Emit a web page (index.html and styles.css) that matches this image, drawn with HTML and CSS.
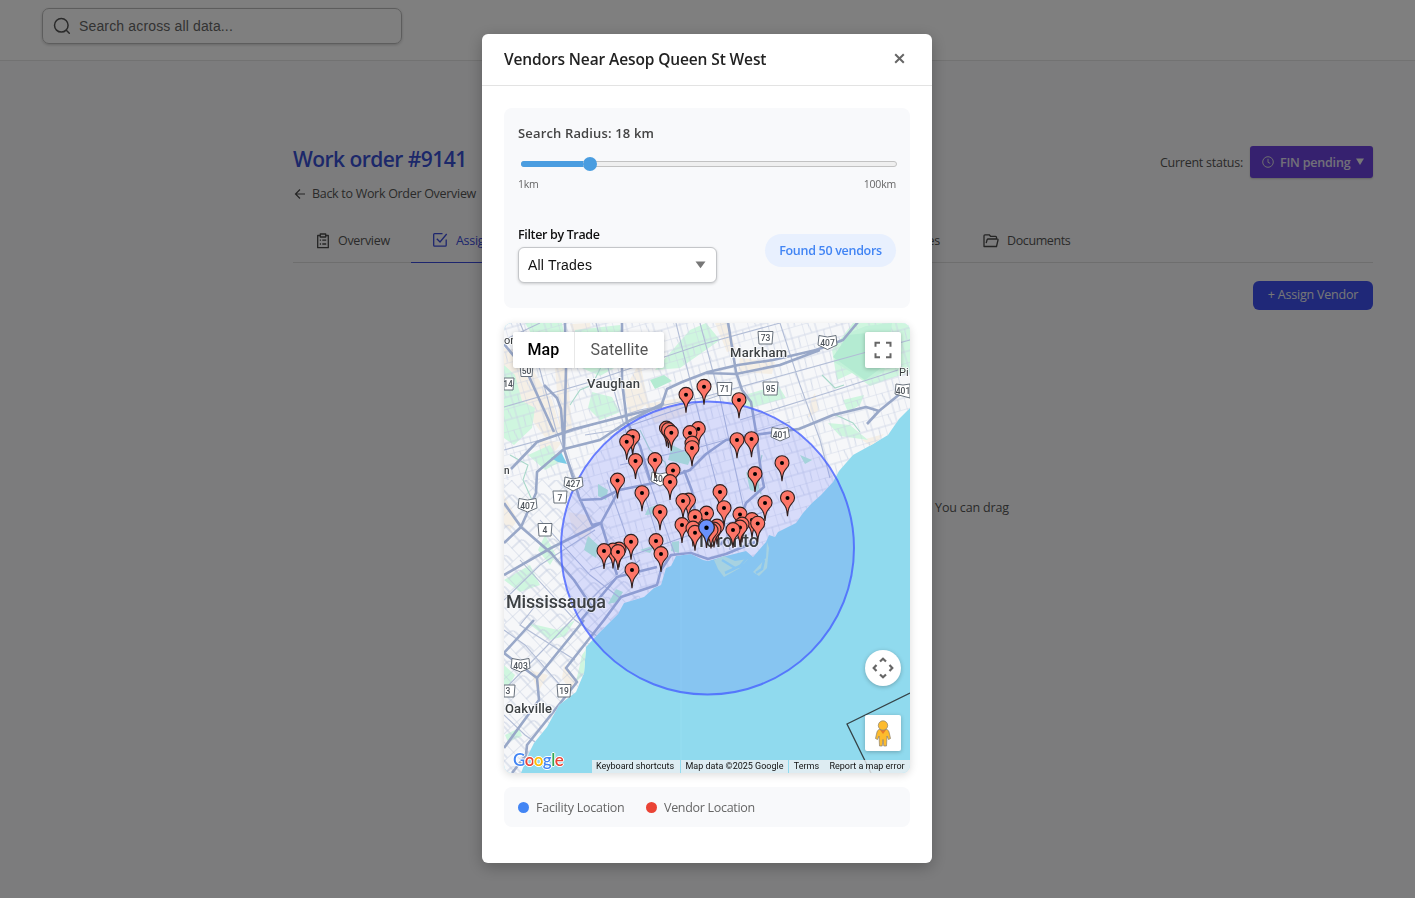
FILE: index.html
```html
<!DOCTYPE html>
<html lang="en">
<head>
<meta charset="utf-8">
<title>Work order #9141</title>
<link rel="stylesheet" href="styles.css">
</head>
<body>
<header class="topbar">
  <div class="search">
    <svg width="18" height="18" viewBox="0 0 18 18" fill="none" stroke="#555" stroke-width="1.5" stroke-linecap="round"><circle cx="8.3" cy="8.3" r="6.8"/><path d="M13.3 13.3 16.3 16.3"/></svg>
    <span class="search-text">Search across all data...</span>
  </div>
</header>
<main class="content">
  <div class="title-row">
    <div>
      <h1 class="title">Work order #9141</h1>
      <a class="back"><svg width="12" height="12" viewBox="0 0 12 12" fill="none" stroke="#4a4a4a" stroke-width="1.2"><path d="M11 6H1.5M6 1.5 1.5 6 6 10.5"/></svg><span class="back-text">Back to Work Order Overview</span></a>
    </div>
    <div class="status">
      <span class="status-label">Current status:</span>
      <span class="status-button">
        <svg width="12" height="12" viewBox="0 0 12 12" fill="none" stroke="#ddd" stroke-width="1"><circle cx="6" cy="6" r="5.3"/><path d="M6 2.8V6.3L8.2 7.4"/></svg>
        <span class="status-text">FIN pending</span>
        <svg width="8" height="8" viewBox="0 0 8 8" fill="#eee"><path d="M0 .5H8L4 7Z"/></svg>
      </span>
    </div>
  </div>
  <nav class="tabs">
    <span class="tab tab-overview"><svg width="14" height="16" viewBox="0 0 14 16" fill="none" stroke="#4a4a4a" stroke-width="1.3"><path d="M4 2.5H1.7V14.7H12.3V2.5H10M4.3 1H9.7V4H4.3Z" stroke-linejoin="round"/><path d="M3.8 7.2H5M6.3 7.2H10.2M3.8 11H5M6.3 11H10.2"/></svg><span class="t-overview">Overview</span></span>
    <span class="tab tab-active"><svg width="16" height="16" viewBox="0 0 16 16" fill="none" stroke="#3b4bdc" stroke-width="1.3"><path d="M10.5 1.7H2.6Q1.7 1.7 1.7 2.6V13.2Q1.7 14.2 2.6 14.2H13.2Q14.2 14.2 14.2 13.2V7.5"/><path d="M4.8 6.8 8 10 14.7 2"/></svg><span>Assignments</span></span>
    <span class="tab tab-invoices"><span>Invoices</span></span>
    <span class="tab tab-docs"><svg width="16" height="16" viewBox="0 0 16 16" fill="none" stroke="#4a4a4a" stroke-width="1.3" stroke-linejoin="round"><path d="M13.5 6V4.3Q13.5 3.3 12.5 3.3H7.5L6.2 1.8H2Q1 1.8 1 2.8V13.5H13.5L15 7Q15.2 6 14 6H5.2Q4.3 6 4 7L3.2 10.2"/></svg><span class="t-docs">Documents</span></span>
  </nav>
  <div class="actions"><span class="assign"><span class="assign-text">+ Assign Vendor</span></span></div>
  <p class="empty">No vendors assigned. You can drag</p>
</main>

<div class="overlay">
  <section class="modal">
    <div class="modal-head">
      <h2 class="modal-title">Vendors Near Aesop Queen St West</h2>
      <svg width="11" height="11" viewBox="0 0 11 11" stroke="#666" stroke-width="2"><path d="M1.2 1.2 9.8 9.8M9.8 1.2 1.2 9.8"/></svg>
    </div>
    <div class="modal-body">
      <div class="panel">
        <div class="radius-label">Search Radius: 18 km</div>
        <div class="slider"><div class="slider-fill"></div><div class="slider-thumb"></div></div>
        <div class="range"><span>1km</span><span class="range-max">100km</span></div>
        <div class="filter-row">
          <div>
            <div class="filter-label">Filter by Trade</div>
            <div class="select"><span>All Trades</span><svg width="11" height="8" viewBox="0 0 11 8" fill="#777"><path d="M.5 .5H10.500L5.5 7.2Z"/></svg></div>
          </div>
          <span class="found"><span class="found-text">Found 50 vendors</span></span>
        </div>
      </div>

      <div class="map">
        <svg class="map-canvas" width="406" height="450" viewBox="504 323 406 450">
          <defs>
            <path id="land" d="M504 323H910V408L899 419 888 435 873 444 853 455 839 471 833 482 821 495 812 503 803 513 796 523 778 532 775 537 769 535 766 542 753 557 746 551 726 556 708 561 703 560 691 554 676 556 671 566 666 568 661 585 654 588 644 597 624 603 618 614 612 620 599 633 586 647 584 673 576 692 559 705 547 727 534 743 529 753 521 773H504Z"/>
            <clipPath id="landclip"><use href="#land"/></clipPath>
            <clipPath id="west"><path d="M504 480 590 480 650 620 560 773H504Z"/></clipPath>
            <clipPath id="east"><path d="M504 323H910V600H645L585 480H504Z"/></clipPath>
            <pattern id="grid-e" width="26" height="22" patternUnits="userSpaceOnUse" patternTransform="translate(6 3) rotate(-16)"><path d="M0 0H26M0 0V22M13 0V22M0 11H26M6 0 8 11M20 11 19 22" fill="none" stroke="#cbd3e4" stroke-width=".8"/></pattern>
            <pattern id="grid-w" width="23" height="20" patternUnits="userSpaceOnUse" patternTransform="rotate(-43)"><path d="M0 0H23M0 0V20M11 0V20M0 10H11Q15 10 15 15V20" fill="none" stroke="#c3ccdf" stroke-width=".9"/></pattern>
            <g id="pin"><path d="M0 18C-.6 10-2 8-4.6 5A7 7 0 1 1 4.6 5C2 8 .6 10 0 18Z" stroke="#30201f" stroke-width="1.1"/><circle r="2" fill="#000"/></g>
          </defs>
          <rect x="504" y="323" width="406" height="450" fill="#90daee"/>
          <use href="#land" fill="#f6f7f9"/>
          <g clip-path="url(#landclip)">
            <g fill="#f5efe6">
              <path d="M504 348 520 350 552 400 561 432 545 437 524 410 512 385 504 380ZM552 330 566 350 572 430 560 432 556 380ZM640 362 648 402 630 420 624 390ZM568 512 592 516 590 540 574 535ZM740 358 775 362 772 374 738 372ZM815 393 819 410 808 418 811 400ZM564 665 578 682 570 690 562 678ZM530 670 548 675 538 692ZM504 495 518 520 510 530 504 525ZM862 440 884 434 872 447Z"/>
              <path d="M570 324 590 323 592 335 575 340ZM715 323 728 323 736 350 727 352ZM645 404 680 398 688 415 655 424ZM540 440 562 442 556 450 540 458Z"/>
            </g>
            <g fill="#cff6df">
              <path d="M504 365 515 375 522 401 535 408 532 428 514 445 504 438ZM525 323 562 323 567 348 538 345ZM575 330 620 325 625 362 600 376 575 365ZM592 392 612 397 620 412 600 420 588 408ZM837 380 832 350 853 323 910 323V372L886 380 870 386 852 373ZM655 370 690 330 706 323 720 340 680 368ZM528 455 550 445 560 462 545 470ZM545 535 556 555 550 565 538 550ZM504 580 530 565 540 585 520 592ZM504 665 515 675 508 688 504 690ZM505 735 519 728 522 736 508 742ZM528 623 558 630 575 620 565 636 550 640ZM582 655 587 648 586 672 576 682ZM828 423 850 425 868 440 840 436ZM735 398 778 385 786 398 750 408ZM843 400 864 395 860 405 848 412Z"/>
            </g>
            <g clip-path="url(#east)"><rect x="504" y="323" width="406" height="280" fill="url(#grid-e)"/></g>
            <g clip-path="url(#west)"><rect x="504" y="470" width="160" height="303" fill="url(#grid-w)"/></g>
            <path d="M834 362 846 334 866 326 892 323 888 350 884 372 866 381Z" fill="#c2f1d9"/>
            <g fill="#b4ebd2"><path d="M848 335 866 333 885 365 865 380 833 357ZM598 484 608 490 606 500 598 496ZM650 380 664 375 672 381 655 389ZM588 536 598 545 596 558 584 550ZM672 445 692 455 688 465 668 460ZM672 542 679 541 679 553 671 551ZM648 508 660 504 656 514 645 515ZM616 589 623 592 617 602 608 604ZM746 472 760 477 758 492 750 490ZM640 550 655 545 650 553ZM800 455 812 460 805 464Z"/></g>
            <path d="M551 458 561 452 567 464 558 462Z" fill="#79cce6"/>
            <g fill="none" stroke="#a9d8ca" stroke-width="1.1"><path d="M595 350 602 365 592 385 580 390 570 405M640 430 650 450 665 462 670 480M762 455 756 480 761 494M836 415 853 423 860 432M822 375 835 388 844 385M510 455 528 465 523 480 532 500"/></g>
            <g fill="none" stroke="#b2bdd6" stroke-width="1.1">
              <path d="M504 407 590 382 700 345 780 323M504 450 570 432 640 410 700 398 820 365 910 340M520 323 540 370 556 430 580 490M596 323 618 405 640 480 660 545M676 323 695 400 718 490 730 550M700 323 720 398 744 510M780 323 800 385 820 440 830 478M740 420 830 392 898 370M620 465 700 447 790 422M590 570 690 535 770 510M607 480 640 575M640 455 675 555M504 340 540 323M585 435 617 430 720 395M504 600 540 565 595 530M504 690 545 648 600 590 640 560M520 560 575 620 605 642M504 630 525 645 560 685M540 520 590 575 620 598M504 715 525 735 535 742M540 600 520 625 575 660"/>
            </g>
            <g fill="none" stroke="#99a8c8" stroke-width="2.6" stroke-linejoin="round">
              <path d="M511 469 537 442 574 429 661 407 667 389 682 382 708 372 738 365 773 360 816 350 843 340 858 322M706 373 736 374 780 365 820 350M504 575 551 548 601 523 619 490 654 483 690 470 706 454 726 440 753 435 799 429 833 415 866 407 879 411 906 389 M879 411 867 424"/>
              <path d="M622 322V382L627 422 640 446 650 480M565 323 566 369 564 449 537 472 536 493 521 527 504 543M544 385 557 398 561 409 564 449 579 497 592 525 601 523 617 575M504 344 527 372 554 432M564 449 600 440 627 422 664 403M504 503 521 527 551 553 574 580 594 610M579 500 601 499 619 490M728 322 736 372 742 390 751 402 756 432 761 472 764 487 746 503 738 525 720 545M604 620 621 597 657 585 661 570 671 555 691 553 708 559 726 554 755 542M581 620 617 577 657 567M684 470 692 491 696 520M534 620 504 653 537 678 539 700 504 748M584 620 537 678M604 620 566 668 577 682 527 745 526 755 512 773"/>
            </g>
          </g>
          <path d="M714 560 724 556 735 561 748 559 740 568 724 577 718 569ZM754 571 766 558 767 542 769 548 767 568 759 576 753 572Z" fill="#b8eada"/>
          <path d="M722 560 735 568 745 565M725 573 740 566 747 558M756 573 762 569 764 560" fill="none" stroke="#90daee" stroke-width="2.5"/>
          <path d="M910 693 847 724 871 773" fill="none" stroke="#354347" stroke-width="1.3"/>
          <path d="M681 557V773" stroke="#9be0f2" stroke-width=".7"/>
          <circle cx="707.5" cy="548" r="146.500" fill="#6371fd" fill-opacity=".2" stroke="#4762ff" stroke-opacity=".8" stroke-width="2"/>

          <g class="shield" fill="#fff" stroke="#69727d">
            <path d="M758 331.500H773L772 344H759ZM717 382.500H732L731 395.500H718ZM763 382H778L777 395H764ZM520 364H533L532 376.500H521ZM504 378H514L513 390H504ZM553 491H567L566 503H554ZM538 523.500H552L551 536H539ZM504 685H515L514 697H504ZM557 684.500H571L570 697H558Z"/>
            <path d="M819 335.500 827.500 337 836 335.500 837 345 827.500 349.500 818 345ZM772 427.500 780 429 788 427.500 789.500 437 780 441 771 437ZM896 384 903 385 910 384V398L895 394ZM519 498.500 527.500 500 536 498.500 537 508 527.500 512 518 508ZM512 658.500 520.500 660 529 658.500 530 668 520.500 672 511 668ZM565 477 573 479 582 477 583 486 573 491 564 486ZM652 472 660 474 669 472 670 481 660 486 651 481Z"/>
          </g>
          <g class="shield-text">
            <text x="765.500" y="341">73</text><text x="724.500" y="392">71</text><text x="770.500" y="391.500">95</text><text x="526.500" y="373.500">50</text><text x="508" y="387">14</text><text x="560" y="500.500">7</text><text x="545" y="533">4</text><text x="508" y="694">3</text><text x="564" y="694">19</text><text x="827.500" y="346">407</text><text x="780" y="437.500">401</text><text x="903" y="393.500">401</text><text x="527.500" y="508.500">407</text><text x="520.500" y="668.500">403</text><text x="573" y="487">427</text><text x="658" y="482">40</text>
          </g>
          <g class="place">
            <text x="587" y="388" textLength="53">Vaughan</text><text x="730" y="357" textLength="57">Markham</text><text x="505" y="713" textLength="47">Oakville</text>
            <text class="place-big" x="506" y="608" textLength="100">Mississauga</text><text class="place-big" x="696" y="547" textLength="63">Toronto</text>
            <text class="place-small" x="504" y="344">or</text><text class="place-small" x="899" y="376">Pi</text><text class="place-n" x="504" y="474">n</text>
          </g>
          <g fill="#fd7567" transform="translate(0 .4)">
            <use href="#pin" x="704" y="386.300"/><use href="#pin" x="686" y="394.300"/><use href="#pin" x="739" y="399.700"/><use href="#pin" x="666.500" y="428"/><use href="#pin" x="668.500" y="429.500"/><use href="#pin" x="698.300" y="428.500"/><use href="#pin" x="671.300" y="432.300"/><use href="#pin" x="690" y="432.500"/><use href="#pin" x="632.700" y="436.500"/><use href="#pin" x="751.500" y="438.700"/><use href="#pin" x="737" y="439.700"/><use href="#pin" x="626.700" y="441.300"/><use href="#pin" x="692" y="443"/><use href="#pin" x="692" y="447.700"/><use href="#pin" x="655" y="459.500"/><use href="#pin" x="635.500" y="460.500"/><use href="#pin" x="782" y="462.700"/><use href="#pin" x="673" y="470"/><use href="#pin" x="755" y="473.500"/><use href="#pin" x="617.500" y="480"/><use href="#pin" x="670" y="481.500"/><use href="#pin" x="720" y="491.500"/><use href="#pin" x="642" y="492.700"/><use href="#pin" x="787.500" y="497.700"/><use href="#pin" x="688.500" y="500"/><use href="#pin" x="683" y="500.500"/><use href="#pin" x="765" y="502.500"/><use href="#pin" x="724" y="507.700"/><use href="#pin" x="660" y="511.700"/><use href="#pin" x="706.500" y="513"/><use href="#pin" x="740" y="514"/><use href="#pin" x="695" y="516.500"/><use href="#pin" x="752" y="519.500"/><use href="#pin" x="757.700" y="523.200"/><use href="#pin" x="742" y="524"/><use href="#pin" x="682" y="524.500"/><use href="#pin" x="717" y="526"/><use href="#pin" x="740" y="527"/><use href="#pin" x="693" y="528"/><use href="#pin" x="714" y="529"/><use href="#pin" x="733" y="529.500"/><use href="#pin" x="711" y="530"/><use href="#pin" x="695" y="532.300"/><use href="#pin" x="656" y="540.500"/><use href="#pin" x="631" y="541.300"/><use href="#pin" x="619" y="549"/><use href="#pin" x="613" y="550"/><use href="#pin" x="604" y="550.500"/><use href="#pin" x="618" y="551.500"/><use href="#pin" x="661" y="553.500"/><use href="#pin" x="632" y="569.700"/>
          </g>
          <use href="#pin" transform="translate(706.500 527.800) scale(1.12)" fill="#6991fd"/>
        </svg>
        <div class="map-types"><span class="type-map">Map</span><span class="type-sat">Satellite</span></div>
        <div class="ctl fullscreen"><svg width="18" height="18" viewBox="0 0 18 18" fill="none" stroke="#666" stroke-width="2"><path d="M1.500 5.800V1.800H6M12 1.800H16.500V5.800M16.500 12.200V16.200H12M6 16.200H1.500V12.200"/></svg></div>
        <div class="ctl pan"><svg width="22" height="22" viewBox="0 0 22 22" fill="none" stroke="#666" stroke-width="2.200"><path d="M8 4.500 11 1.700 14 4.500M8 17.500 11 20.300 14 17.500M4.500 8 1.700 11 4.500 14M17.500 8 20.300 11 17.500 14"/></svg></div>
        <div class="ctl pegman"><svg width="16" height="27" viewBox="0 0 16 27" stroke="#8b8272" stroke-width=".7"><path d="M4 9.500H12Q14 10 14.500 14L15.500 18.500 13.500 19.500 12 16 11.500 26H8.800L8 19.500 7.200 26H4.500L4 16 2.500 19.500.5 18.500 1.500 14Q2 10 4 9.500Z" fill="#fdbb2d"/><path d="M5 10H11L8 14Z" fill="#e87b2b" stroke="none"/><circle cx="8" cy="5.500" r="4.700" fill="#fdbb2d"/></svg></div>
        <div class="google"><span class="g-blue">G</span><span class="g-red">o</span><span class="g-yellow">o</span><span class="g-blue">g</span><span class="g-green">l</span><span class="g-red">e</span></div>
        <div class="credits"><span class="cr c1">Keyboard shortcuts</span><span class="cr c2">Map data ©2025 Google</span><span class="cr c3">Terms</span><span class="cr c4">Report a map error</span></div>
      </div>

      <div class="legend">
        <span class="key key-facility"><i class="dot dot-blue"></i><span class="t-fac">Facility Location</span></span>
        <span class="key"><i class="dot dot-red"></i><span class="t-ven">Vendor Location</span></span>
      </div>
    </div>
  </section>
</div>
</body>
</html>
```

FILE: styles.css
```css
* { box-sizing: border-box; }
body { margin: 0; height: 898px; overflow: hidden; background: #f9f9fa; font-family: "Open Sans", "Noto Sans", sans-serif; font-size: 13px; color: #555; }
h1, h2, p { margin: 0; }
span { white-space: nowrap; }
svg { flex: none; display: block; }

.topbar { height: 61px; padding: 8px 0 0 42px; background: #fff; border-bottom: 1px solid #e4e4e4; }
.search { width: 360px; height: 36px; display: flex; align-items: center; gap: 8px; padding-left: 10px; border: 1px solid #bbb; border-radius: 7px; box-shadow: 0 1px 3px rgba(0,0,0,.2); font: 14px "Liberation Sans", sans-serif; color: #666; }
.search-text { letter-spacing: .15px; }

.content { width: 1080px; margin-left: 293px; padding-top: 85px; }
.title-row { display: flex; justify-content: space-between; align-items: flex-start; height: 72px; }
.title { font-size: 21px; line-height: 26px; font-weight: 600; color: #3850d4; letter-spacing: -.55px; }
.back { display: flex; align-items: center; gap: 6px; margin-top: 13px; padding-left: 1px; line-height: 18px; }
.back-text { font-size: 12.500px; letter-spacing: -.3px; }
.status { display: flex; align-items: center; gap: 7px; }
.status-label { font-weight: 500; font-size: 12.500px; letter-spacing: -.25px; }
.status-button { display: flex; align-items: center; gap: 6px; width: 123px; height: 32px; padding-left: 12px; border-radius: 3px; background: #6c43df; color: #e4e0f2; box-shadow: 0 1px 2px rgba(0,0,0,.2); }
.status-text { font-size: 12.500px; font-weight: 600; letter-spacing: -.2px; }

.tabs { display: flex; height: 45px; border-bottom: 1px solid #ddd; }
.tab { display: flex; align-items: center; gap: 8px; padding: 0 21px; height: 45px; font-size: 12.500px; letter-spacing: -.3px; }
.tab-overview { width: 118px; padding-left: 23px; }
.tab-active { width: 140px; color: #3b4bdc; border-bottom: 1px solid #3b4bdc; }
.tab-invoices { width: 410px; justify-content: flex-end; }
.tab-docs { padding-left: 22px; }
.t-docs { letter-spacing: -.4px; }
.actions { display: flex; justify-content: flex-end; margin-top: 18px; }
.assign { display: flex; align-items: center; justify-content: center; width: 120px; height: 29px; padding-bottom: 2px; border-radius: 6px; background: #3f51f0; color: #eee; font-size: 12.500px; }
.assign-text { letter-spacing: -.2px; }
.empty { width: 716px; margin-top: 189px; text-align: right; line-height: 18px; font-size: 12.500px; letter-spacing: -.15px; }

.overlay { position: fixed; inset: 0; display: flex; align-items: center; justify-content: center; padding: 0 1px 1px 0; background: rgba(0,0,0,.5); }
.modal { width: 450px; height: 829px; border-radius: 6px; background: #fff; box-shadow: 0 4px 16px rgba(0,0,0,.25); }
.modal-head { display: flex; align-items: center; justify-content: space-between; height: 52px; padding: 0 27px 2px 22px; border-bottom: 1px solid #e3e3e3; }
.modal-title { font-size: 15.500px; font-weight: 600; color: #222; letter-spacing: -.12px; white-space: nowrap; }
.modal-body { padding: 22px; }
.panel { height: 200px; padding: 15px 14px; border-radius: 8px; background: #f8f9fb; }
.radius-label { width: max-content; font-size: 13px; line-height: 20px; font-weight: 600; color: #444; letter-spacing: .15px; }
.slider { display: flex; align-items: center; width: 376px; height: 6px; margin: 18px 0 0 3px; border: 1px solid #c2c2c2; border-radius: 3px; background: #efefef; }
.slider-fill { width: 62px; height: 6px; margin-left: -1px; border-radius: 3px 0 0 3px; background: #4a9de0; }
.slider-thumb { width: 14px; height: 14px; margin-left: -.5px; border-radius: 50%; background: #4a9de0; }
.range { display: flex; justify-content: space-between; margin-top: 9px; font-size: 10.500px; line-height: 16px; color: #666; letter-spacing: -.2px; }
.filter-row { display: flex; justify-content: space-between; margin-top: 33px; }
.filter-label { width: max-content; height: 22px; line-height: 19px; font-size: 12.500px; font-weight: 600; color: #111; letter-spacing: -.35px; }
.select { display: flex; align-items: center; justify-content: space-between; width: 199px; height: 36px; padding: 0 10px 0 9px; border: 1px solid #c4c6c9; border-radius: 6px; background: #fff; box-shadow: 0 1px 3px rgba(0,0,0,.18); font: 14px "Liberation Sans", sans-serif; color: #111; letter-spacing: .2px; }
.found { display: flex; align-items: center; justify-content: center; width: 131px; height: 33px; margin-top: 9px; border-radius: 17px; background: #e8f0fe; color: #4285f4; font-size: 12.500px; font-weight: 600; }
.found-text { letter-spacing: -.3px; }

.map { position: relative; width: 406px; height: 450px; margin-top: 15px; border-radius: 8px; overflow: hidden; box-shadow: 0 2px 8px rgba(0,0,0,.14); font-family: Roboto, sans-serif; }
.shield { stroke-width: 1; }
.shield-text { font: 500 8.500px Roboto, sans-serif; text-anchor: middle; fill: #4c5259; }
.place { font: 500 13px Roboto, sans-serif; fill: #3c4043; stroke: #fff; stroke-opacity: .8; stroke-width: 2px; paint-order: stroke; }
.place-big { font-size: 18px; stroke-opacity: .4; }
.place-small { font-size: 11px; font-weight: 400; }
.place-n { font-size: 10px; }
.map-types { position: absolute; left: 9px; top: 9px; display: flex; height: 36px; background: #fff; border-radius: 2px; box-shadow: 0 1px 4px rgba(0,0,0,.22); font-size: 16px; line-height: 36px; }
.type-map { width: 62px; text-align: center; font-weight: 500; color: #000; border-right: 1px solid #e8e8e8; letter-spacing: .1px; }
.type-sat { width: 89px; text-align: center; color: #565656; letter-spacing: .05px; }
.ctl { position: absolute; right: 9px; display: flex; align-items: center; justify-content: center; width: 36px; height: 36px; background: #fff; border-radius: 2px; box-shadow: 0 1px 4px rgba(0,0,0,.25); }
.fullscreen { top: 9px; }
.pan { top: 327px; border-radius: 50%; }
.pegman { top: 392px; }
.google { position: absolute; left: 9px; top: 427px; font: 600 17px/20px Lato, sans-serif; letter-spacing: -.6px; text-shadow: 1px 0 #fff, -1px 0 #fff, 0 1px #fff, 0 -1px #fff; }
.g-blue { color: #4285f4; }
.g-red { color: #ea4335; }
.g-yellow { color: #fbbc05; }
.g-green { color: #34a853; }
.credits { position: absolute; right: 0; bottom: 0; display: flex; height: 13px; font-size: 9px; line-height: 13px; color: #111; }
.cr { background: rgba(240,240,243,.8); text-align: center; }
.c1 { width: 88px; padding-right: 2px; }
.c2 { width: 107px; margin-left: 1px; }
.c3 { width: 35px; margin-left: 1px; }
.c4 { width: 86px; }

.legend { display: flex; align-items: center; height: 40px; margin-top: 14px; padding-left: 14px; border-radius: 8px; background: #f8f9fb; color: #666; font-size: 12.500px; }
.key { display: flex; align-items: center; gap: 7px; }
.key-facility { width: 128px; }
.dot { width: 11px; height: 11px; border-radius: 50%; }
.dot-blue { background: #4285f4; }
.dot-red { background: #ea4335; }
.t-fac { letter-spacing: -.24px; }
.t-ven { letter-spacing: -.3px; }
```
